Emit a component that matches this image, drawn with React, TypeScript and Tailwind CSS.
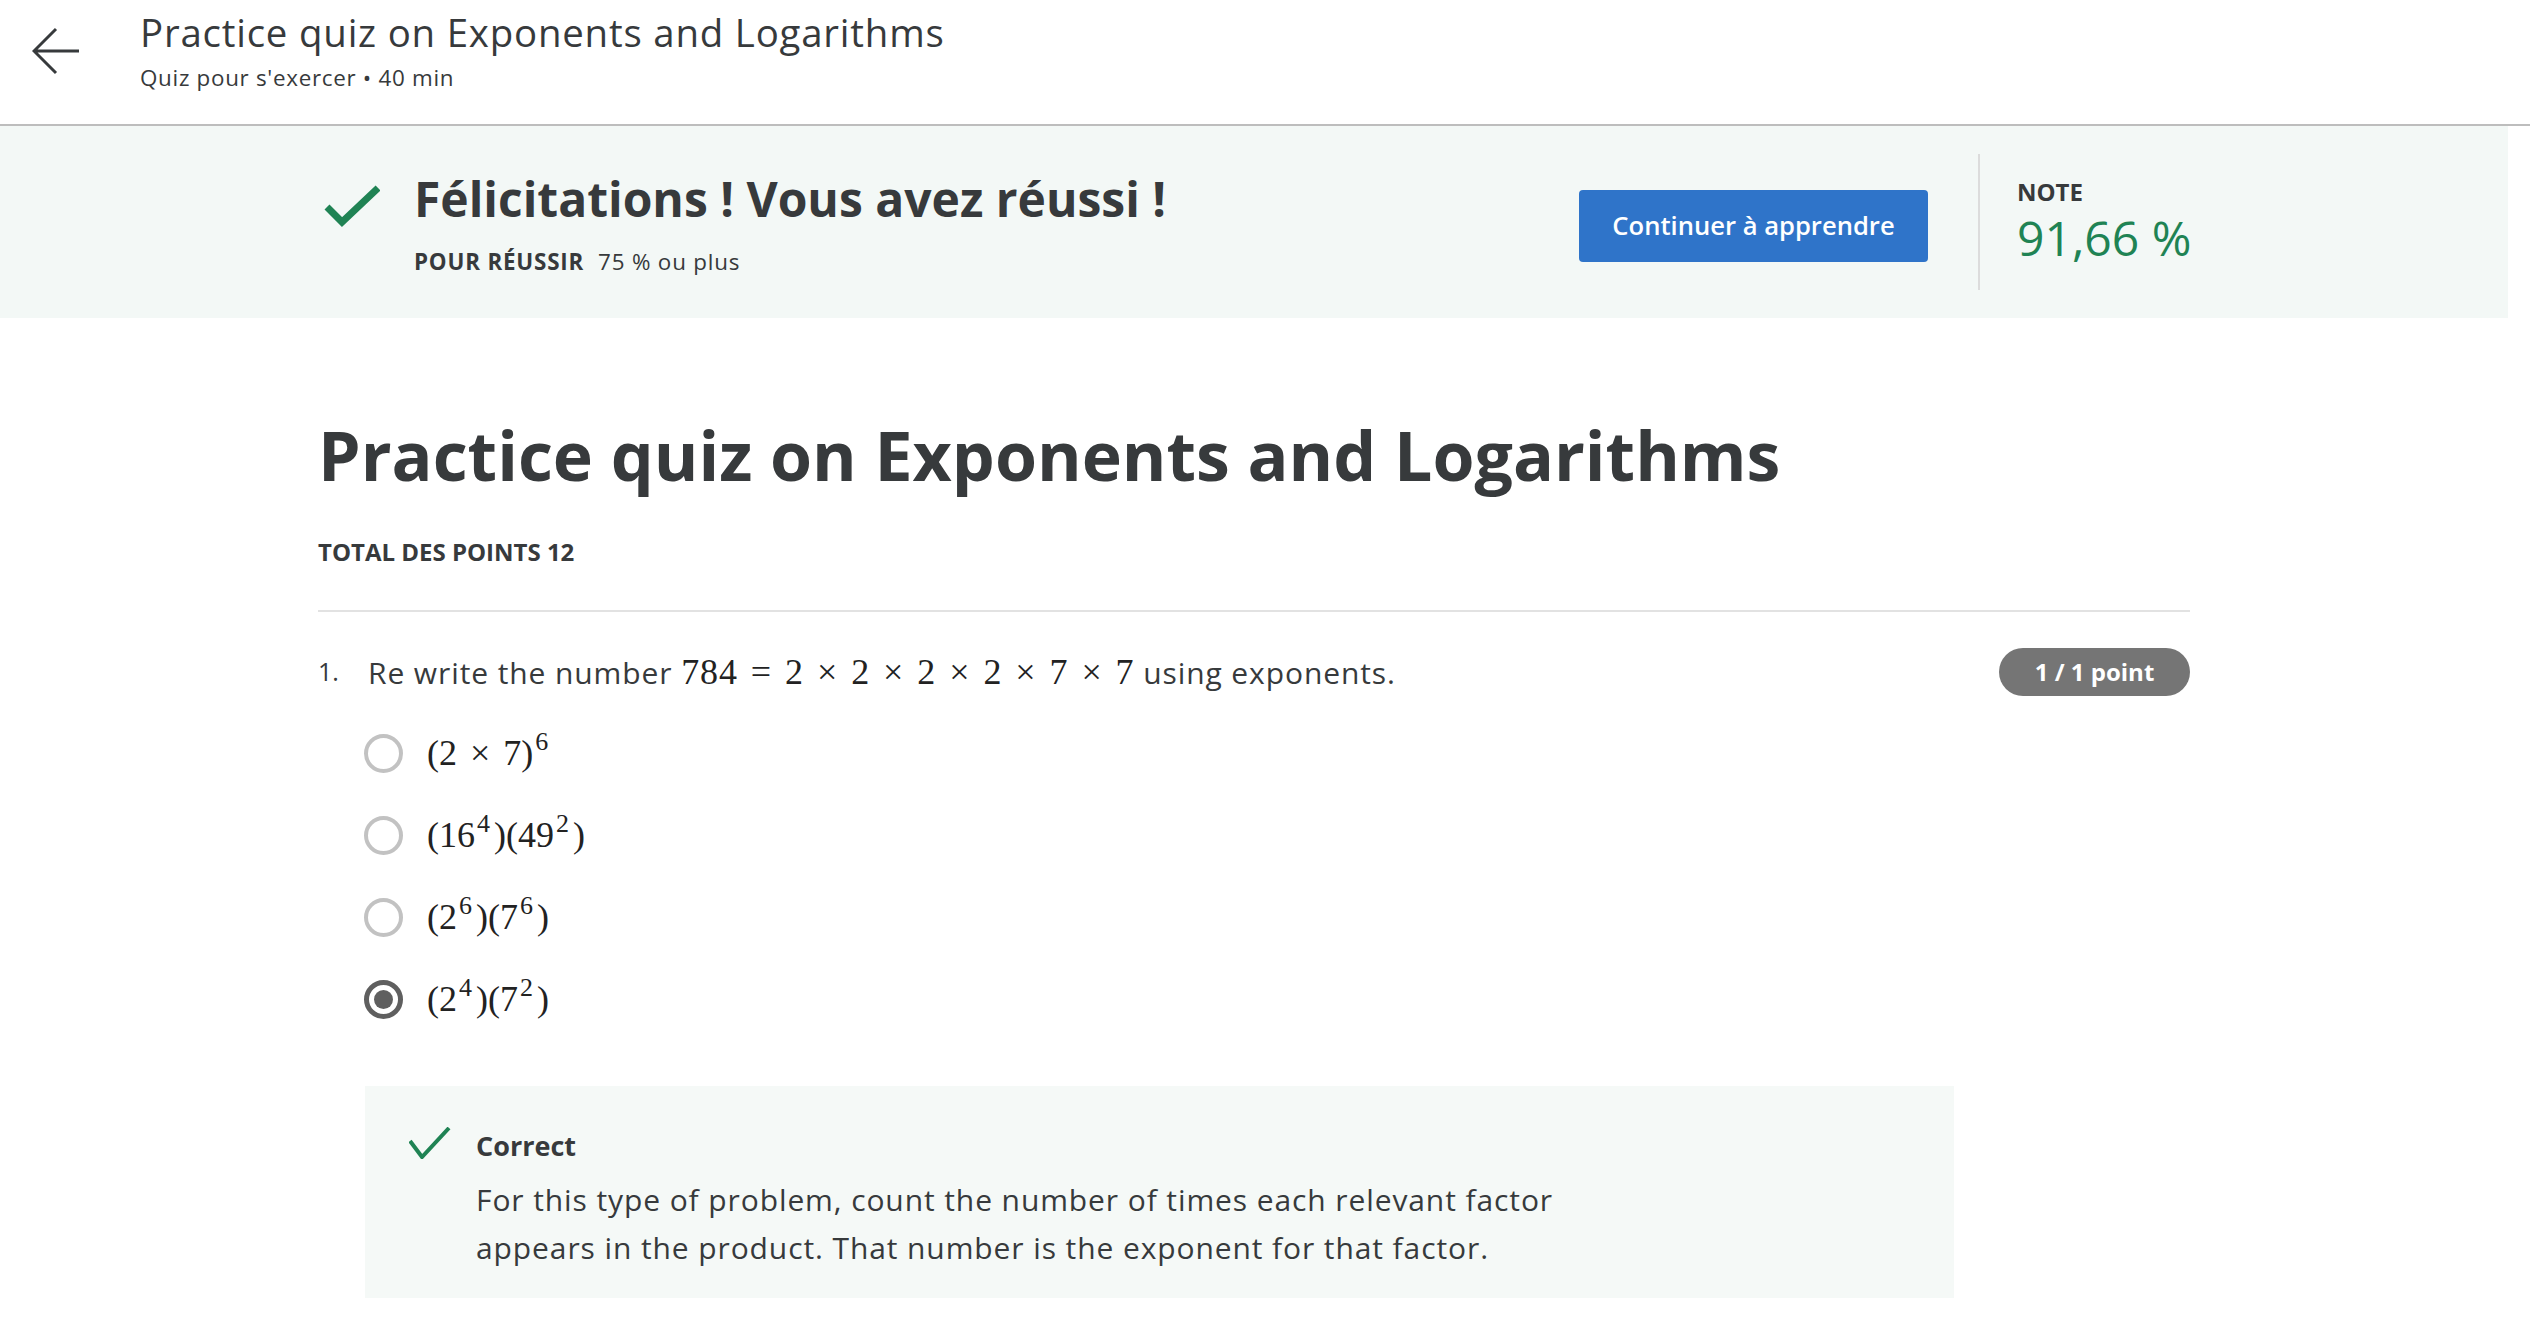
import { ReactNode } from "react";

const Sup = ({ children }: { children: ReactNode }) => (
  <span className="relative top-[-15px] ml-[2px] mr-[4px] align-baseline text-[26px] leading-none">{children}</span>
);

const Times = () => <span className="mx-[13px]">×</span>;

const Math = ({ children }: { children: ReactNode }) => (
  <span className="whitespace-nowrap font-['Liberation_Serif',serif] text-[36px] text-[#222]">{children}</span>
);

const Radio = ({ checked }: { checked?: boolean }) =>
  checked ? (
    <span className="flex h-[39px] w-[39px] items-center justify-center rounded-full border-[5px] border-[#5f5f5f]">
      <span className="h-[19px] w-[19px] rounded-full bg-[#5f5f5f]" />
    </span>
  ) : (
    <span className="h-[39px] w-[39px] rounded-full border-[4px] border-[#c2c2c2]" />
  );

const options: ReactNode[] = [
  <>
    (2<Times />7)<Sup>6</Sup>
  </>,
  <>
    (16<Sup>4</Sup>)(49<Sup>2</Sup>)
  </>,
  <>
    (2<Sup>6</Sup>)(7<Sup>6</Sup>)
  </>,
  <>
    (2<Sup>4</Sup>)(7<Sup>2</Sup>)
  </>,
];

export default function App() {
  return (
    <div className="min-h-[1342px] w-[2530px] bg-white font-['Open_Sans',sans-serif] text-[#373a3c]">
      {/* top bar */}
      <header className="flex h-[126px] items-start border-b-2 border-[#bdbdbd]">
        <svg className="ml-[32px] mt-[27px]" width="48" height="48" viewBox="0 0 48 48" fill="none" stroke="#373a3c" strokeWidth="3">
          <path d="M47 24H2M24 2L2 24l22 22" />
        </svg>
        <div className="ml-[60px] pt-[8px]">
          <div className="text-[38.4px] leading-[48px] tracking-[0.8px]">Practice quiz on Exponents and Logarithms</div>
          <div className="mt-[8px] text-[22.4px] leading-[28px] tracking-[0.7px]">Quiz pour s'exercer • 40 min</div>
        </div>
      </header>

      {/* passed banner */}
      <div className="h-[192px] w-[2508px] bg-[#f3f8f6]">
        <div className="mx-auto flex h-full w-[1872px] items-center">
          <div className="flex flex-1 items-start">
            <svg className="ml-[6px] mt-[16px]" width="56" height="44" viewBox="0 0 56 44" fill="none" stroke="#1f8354" strokeWidth="7">
              <path d="M3 22l15 15L54 3" />
            </svg>
            <div className="ml-[34px]">
              <div className="text-[48px] font-bold leading-[60px]">Félicitations ! Vous avez réussi !</div>
              <div className="mt-[19px] flex gap-[14px] text-[22.4px] leading-[28px] tracking-[0.8px]">
                <span className="font-bold">POUR RÉUSSIR</span>
                <span>75 % ou plus</span>
              </div>
            </div>
          </div>
          <button className="mt-[8px] h-[72px] w-[349px] rounded-[4px] bg-[#2f74c9] text-[25.6px] font-semibold text-white">
            Continuer à apprendre
          </button>
          <div className="ml-[50px] flex h-[136px] w-[212px] flex-col justify-center whitespace-nowrap border-l-2 border-[#dcdcdc] pl-[37px]">
            <div className="text-[24px] font-bold leading-[30px]">NOTE</div>
            <div className="mt-[1px] text-[48px] leading-[60px] text-[#1f8354]">91,66 %</div>
          </div>
        </div>
      </div>

      {/* quiz body */}
      <main className="w-[2508px]">
        <div className="mx-auto w-[1872px]">
          <h1 className="mt-[97px] text-[68px] font-bold leading-[80px]">Practice quiz on Exponents and Logarithms</h1>
          <div className="mt-[42px] text-[24px] font-bold leading-[30px]">TOTAL DES POINTS 12</div>
          <div className="mt-[43px] border-t-2 border-[#e2e2e2]" />

          <div className="mt-[36px] flex h-[48px] items-center">
            <span className="w-[50px] text-[25px]">1.</span>
            <div className="flex-1 text-[30px] leading-[40px] tracking-[0.9px]">
              Re write the number{" "}
              <Math>
                784<span className="mx-[13px]">=</span>2<Times />2<Times />2<Times />2<Times />7<Times />7
              </Math>{" "}
              using exponents.
            </div>
            <span className="flex h-[48px] w-[191px] items-center justify-center rounded-full bg-[#757575] text-[24px] font-bold text-white">
              1 / 1 point
            </span>
          </div>

          <div className="mt-[16px] pl-[46px]">
            {options.map((o, i) => (
              <div key={i} className="flex h-[82px] items-center">
                <Radio checked={i === 3} />
                <span className="ml-[24px]">
                  <Math>{o}</Math>
                </span>
              </div>
            ))}
          </div>

          <div className="ml-[47px] mt-[46px] flex w-[1589px] bg-[#f5f9f7] pb-[26px] pt-[41px]">
            <svg className="ml-[44px]" width="42" height="32" viewBox="0 0 42 32" fill="none" stroke="#1f8354" strokeWidth="4">
              <path d="M1 14l12 16L40 1" />
            </svg>
            <div className="ml-[25px] mt-[1px]">
              <div className="text-[27px] font-bold leading-[36px]">Correct</div>
              <p className="mt-[12px] max-w-[1110px] text-[30px] leading-[48px] tracking-[0.9px]">
                For this type of problem, count the number of times each relevant factor appears in the product. That
                number is the exponent for that factor.
              </p>
            </div>
          </div>
        </div>
      </main>
    </div>
  );
}
